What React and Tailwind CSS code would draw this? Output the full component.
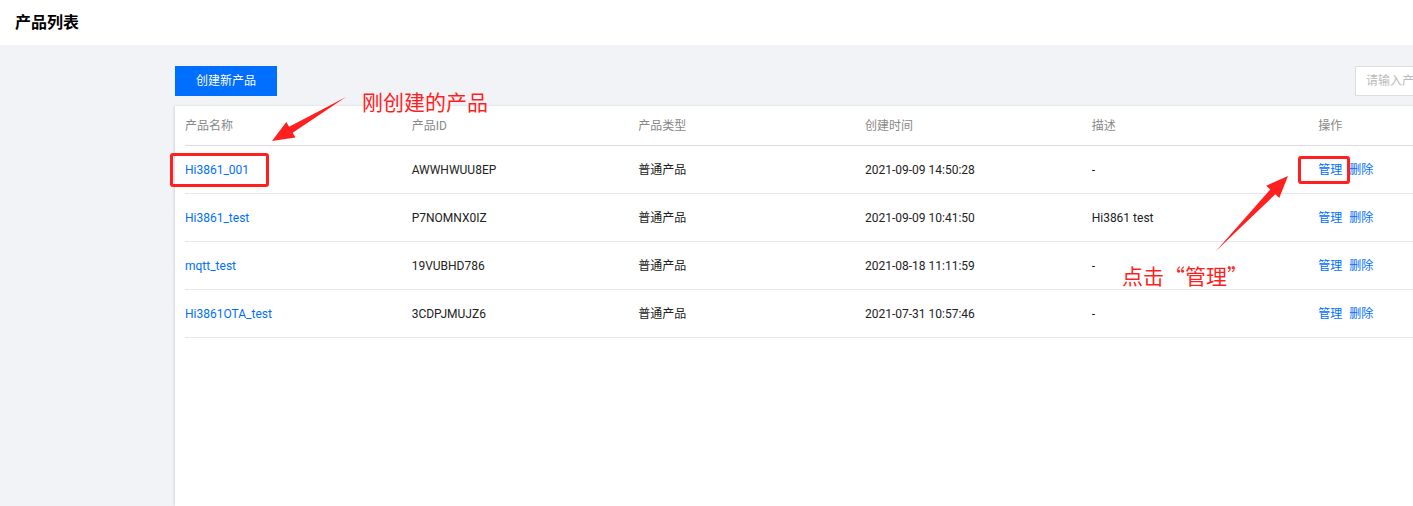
import React from "react";

const rows = [
  { name: "Hi3861_001", id: "AWWHWUU8EP", type: "普通产品", time: "2021-09-09 14:50:28", desc: "-" },
  { name: "Hi3861_test", id: "P7NOMNX0IZ", type: "普通产品", time: "2021-09-09 10:41:50", desc: "Hi3861 test" },
  { name: "mqtt_test", id: "19VUBHD786", type: "普通产品", time: "2021-08-18 11:11:59", desc: "-" },
  { name: "Hi3861OTA_test", id: "3CDPJMUJZ6", type: "普通产品", time: "2021-07-31 10:57:46", desc: "-" },
];

const headers = ["产品名称", "产品ID", "产品类型", "创建时间", "描述", "操作"];

function Arrow({ x1, y1, x2, y2 }) {
  // tapered arrow from (x1,y1) tail to (x2,y2) head
  const dx = x2 - x1;
  const dy = y2 - y1;
  const len = Math.hypot(dx, dy);
  const ux = dx / len;
  const uy = dy / len;
  const px = -uy;
  const py = ux;
  const headLen = 22;
  const headW = 9;
  const bodyW = 3.5;
  const bx = x2 - ux * headLen;
  const by = y2 - uy * headLen;
  const pts = [
    [x1, y1],
    [bx + px * bodyW, by + py * bodyW],
    [bx + px * headW, by + py * headW],
    [x2, y2],
    [bx - px * headW, by - py * headW],
    [bx - px * bodyW, by - py * bodyW],
  ]
    .map((p) => p.join(","))
    .join(" ");
  return <polygon points={pts} fill="#ff1f1f" />;
}

export default function App() {
  return (
    <div
      className="relative w-[1413px] h-[506px] overflow-hidden bg-[#f2f3f7] text-[12px] text-[#222]"
      style={{ fontFamily: "Roboto, 'Noto Sans CJK SC', sans-serif" }}
    >
      <div className="h-[45px] bg-white flex items-center px-[15px]">
        <h1 className="text-[16px] font-bold text-black">产品列表</h1>
      </div>

      <div className="pl-[175px] pt-[21px]">
        <div className="w-[1380px]">
          <div className="flex justify-between items-center h-[30px]">
            <button className="h-[30px] w-[102px] bg-[#006eff] text-white text-[12px]">创建新产品</button>
            <div className="h-[30px] w-[200px] border border-[#dddddd] bg-white flex items-center px-[10px] text-[#bbbbbb] whitespace-nowrap">
              请输入产品名称
            </div>
          </div>

          <div className="mt-[10px] bg-white h-[400px] shadow-[-1px_0_2px_rgba(0,0,0,0.12)] px-[10px]">
            <div className="grid grid-cols-6 h-[40px] items-center border-b border-[#dcdde3] text-[#888888]">
              {headers.map((h) => (
                <div key={h}>{h}</div>
              ))}
            </div>
            {rows.map((r) => (
              <div key={r.id} className="grid grid-cols-6 h-[48px] items-center border-b border-[#e7e8ec]">
                <div className="text-[#006eff]">{r.name}</div>
                <div>{r.id}</div>
                <div>{r.type}</div>
                <div>{r.time}</div>
                <div>{r.desc}</div>
                <div className="flex gap-[7px] text-[#006eff]">
                  <span>管理</span>
                  <span>删除</span>
                </div>
              </div>
            ))}
          </div>
        </div>
      </div>

      {/* annotations */}
      <div className="absolute left-[170px] top-[153px] w-[99px] h-[34px] border-[3px] border-[#ff1f1f] rounded-[3px]" />
      <div className="absolute left-[1298px] top-[156px] w-[52px] h-[28px] border-[3px] border-[#ff1f1f] rounded-[3px]" />
      <div className="absolute left-[362px] top-[87px] text-[21px] leading-[28px] text-[#ff1f1f] font-['Noto_Sans_CJK_SC',sans-serif]">刚创建的产品</div>
      <div className="absolute left-[1122px] top-[261px] text-[21px] leading-[28px] text-[#ff1f1f] whitespace-nowrap font-['Noto_Sans_CJK_SC',sans-serif]">点击“管理”</div>
      <svg className="absolute left-0 top-0 pointer-events-none" width="1413" height="506">
        <Arrow x1={346} y1={97} x2={272} y2={141} />
        <Arrow x1={1216} y1={251} x2={1288} y2={176} />
      </svg>
    </div>
  );
}
